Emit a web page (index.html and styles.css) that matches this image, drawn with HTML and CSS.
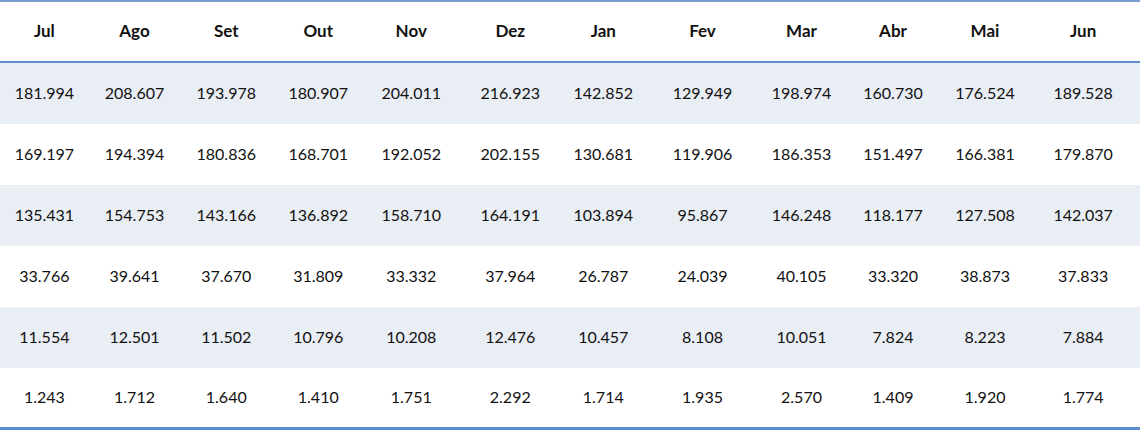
FILE: index.html
```html
<!doctype html>
<html lang="pt">
<head>
    <meta charset="UTF-8">
    <meta name="viewport" content="width=device-width, initial-scale=1.0">
    <title>Tabela mensal</title>
    <link rel="stylesheet" href="styles.css">
</head>
<body>
<table class="months">
    <colgroup>
        <col style="width: 88.75px">
        <col style="width: 91.5px">
        <col style="width: 92px">
        <col style="width: 92px">
        <col style="width: 94px">
        <col style="width: 104px">
        <col style="width: 82px">
        <col style="width: 116.5px">
        <col style="width: 81.5px">
        <col style="width: 101.5px">
        <col style="width: 82.5px">
        <col style="width: 113.75px">
    </colgroup>
    <thead>
    <tr>
        <th>Jul</th><th>Ago</th><th>Set</th><th>Out</th><th>Nov</th><th>Dez</th>
        <th>Jan</th><th>Fev</th><th>Mar</th><th>Abr</th><th>Mai</th><th>Jun</th>
    </tr>
    </thead>
    <tbody>
    <tr>
        <td>181.994</td><td>208.607</td><td>193.978</td><td>180.907</td><td>204.011</td><td>216.923</td>
        <td>142.852</td><td>129.949</td><td>198.974</td><td>160.730</td><td>176.524</td><td>189.528</td>
    </tr>
    <tr>
        <td>169.197</td><td>194.394</td><td>180.836</td><td>168.701</td><td>192.052</td><td>202.155</td>
        <td>130.681</td><td>119.906</td><td>186.353</td><td>151.497</td><td>166.381</td><td>179.870</td>
    </tr>
    <tr>
        <td>135.431</td><td>154.753</td><td>143.166</td><td>136.892</td><td>158.710</td><td>164.191</td>
        <td>103.894</td><td>95.867</td><td>146.248</td><td>118.177</td><td>127.508</td><td>142.037</td>
    </tr>
    <tr>
        <td>33.766</td><td>39.641</td><td>37.670</td><td>31.809</td><td>33.332</td><td>37.964</td>
        <td>26.787</td><td>24.039</td><td>40.105</td><td>33.320</td><td>38.873</td><td>37.833</td>
    </tr>
    <tr>
        <td>11.554</td><td>12.501</td><td>11.502</td><td>10.796</td><td>10.208</td><td>12.476</td>
        <td>10.457</td><td>8.108</td><td>10.051</td><td>7.824</td><td>8.223</td><td>7.884</td>
    </tr>
    <tr>
        <td>1.243</td><td>1.712</td><td>1.640</td><td>1.410</td><td>1.751</td><td>2.292</td>
        <td>1.714</td><td>1.935</td><td>2.570</td><td>1.409</td><td>1.920</td><td>1.774</td>
    </tr>
    </tbody>
</table>
</body>
</html>
```

FILE: styles.css
```css
body {
    margin: 0;
    padding: 0;
    background: #fff;
    font-family: Lato, "Open Sans", Arial, sans-serif;
    color: #111;
}

.months {
    width: 1140px;
    table-layout: fixed;
    border-collapse: collapse;
    border-top: 2px solid #7b9fd4;
    border-bottom: 3px solid #5b8ccf;
}

.months th,
.months td {
    padding: 0 0 2px;
    text-align: center;
    vertical-align: middle;
}

.months th {
    height: 57px;
    font-size: 17px;
    font-weight: 700;
    border-bottom: 2px solid #5f8fd1;
}

.months td {
    height: 59px;
    font-size: 16px;
    font-weight: 400;
}

.months tbody tr:nth-child(odd) {
    background: #e9edf4;
}

.months tbody tr:last-child td {
    height: 57px;
}
```
